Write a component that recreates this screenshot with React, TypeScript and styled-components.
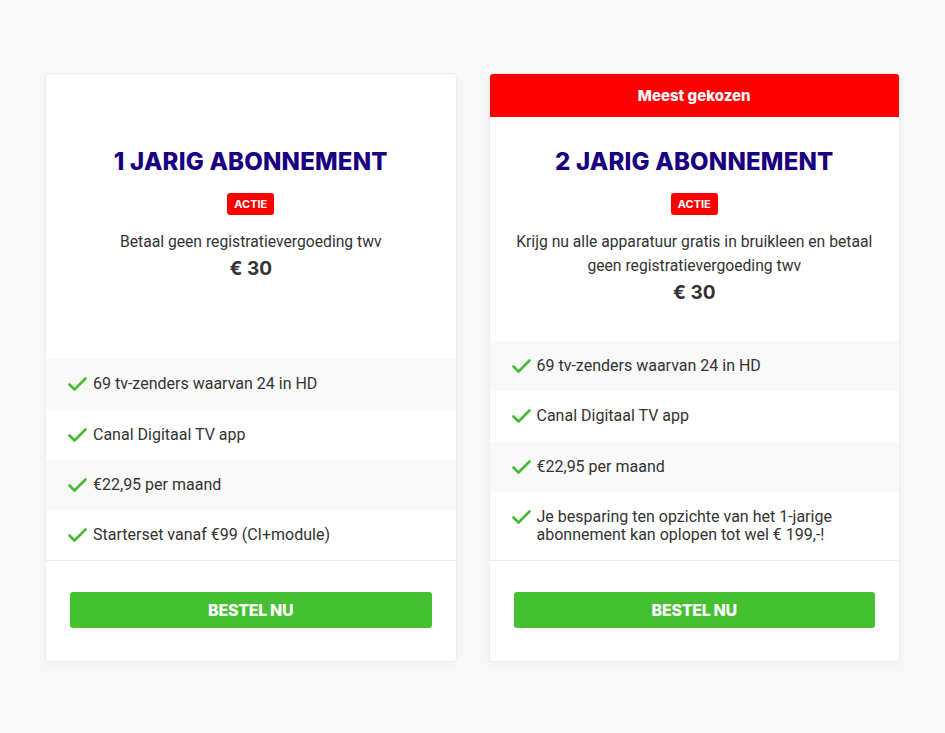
import styled, { createGlobalStyle } from 'styled-components';

const GlobalStyle = createGlobalStyle`
  html, body {
    margin: 0;
    padding: 0;
    background: #f8f8f8;
  }
  body {
    font-family: Roboto, 'Liberation Sans', Arial, sans-serif;
    color: #333;
  }
`;

interface IFeatured {
  featured?: boolean;
}

const Page = styled.div`
  display: flex;
  justify-content: center;
  gap: 32px;
  padding: 73px 45px 70px;
`;

const Card = styled.div`
  flex: 1;
  display: flex;
  flex-direction: column;
  background: #fff;
  border: 1px solid #ececec;
  border-radius: 4px;
  box-shadow: 0 2px 10px rgba(0, 0, 0, 0.03);
  overflow: hidden;
`;

const Ribbon = styled.div<IFeatured>`
  height: 44px;
  display: flex;
  align-items: center;
  justify-content: center;
  background: ${({ featured }) => (featured ? '#ff0000' : 'transparent')};
  color: #fff;
  font-family: Inter, sans-serif;
  font-weight: 800;
  font-size: 15px;
  margin: -1px -1px 0;
`;

const Top = styled.div`
  display: flex;
  flex-direction: column;
  align-items: center;
  padding: 30px 20px 33px;
  text-align: center;
`;

const Title = styled.h2`
  margin: 0;
  font-family: Inter, sans-serif;
  font-weight: 800;
  font-size: 24px;
  line-height: 30px;
  color: #1a0080;
  letter-spacing: 0.2px;
`;

const Badge = styled.span`
  margin-top: 16px;
  background: #ff0000;
  color: #fff;
  font-family: Inter, sans-serif;
  font-weight: 700;
  font-size: 11px;
  line-height: 22px;
  height: 22px;
  padding: 0 7px;
  border-radius: 3px;
`;

const Description = styled.p`
  margin: 15px 0 0;
  font-size: 15.7px;
  line-height: 24px;
  color: #333;
`;

const Price = styled.div`
  font-family: Inter, sans-serif;
  font-weight: 700;
  font-size: 19px;
  line-height: 30px;
  color: #333;
`;

const Features = styled.ul`
  list-style: none;
  margin: auto 0 0;
  padding: 0;
`;

const Feature = styled.li`
  display: flex;
  align-items: flex-start;
  gap: 6px;
  padding: 16px 20px 16px 22px;
  font-size: 16px;
  line-height: 18.25px;
  color: #333;
  &:nth-child(odd) {
    background: #f9f9f9;
  }
`;

const Check = styled.svg`
  flex: none;
  width: 19px;
  height: 18px;
`;

const Footer = styled.div`
  border-top: 1px solid #ececec;
  padding: 31px 24px 33px;
`;

const OrderButton = styled.button`
  display: block;
  width: 100%;
  height: 36px;
  border: none;
  border-radius: 3px;
  background: #44c030;
  color: #fff;
  font-family: Inter, sans-serif;
  font-weight: 800;
  font-size: 16px;
  letter-spacing: -0.3px;
  cursor: pointer;
`;

const CheckIcon = () => (
  <Check viewBox="0 0 19 18">
    <path d="M1.5 9.5 L6.5 14.5 L17.5 3.5" fill="none" stroke="#44bb33" strokeWidth="2.6" strokeLinecap="round" strokeLinejoin="round" />
  </Check>
);

interface IPlan {
  featured?: boolean;
  title: string;
  description: string;
  price: string;
  features: string[];
}

const plans: IPlan[] = [
  {
    title: '1 JARIG ABONNEMENT',
    description: 'Betaal geen registratievergoeding twv',
    price: '€ 30',
    features: ['69 tv-zenders waarvan 24 in HD', 'Canal Digitaal TV app', '€22,95 per maand', 'Starterset vanaf €99 (CI+module)'],
  },
  {
    featured: true,
    title: '2 JARIG ABONNEMENT',
    description: 'Krijg nu alle apparatuur gratis in bruikleen en betaal geen registratievergoeding twv',
    price: '€ 30',
    features: [
      '69 tv-zenders waarvan 24 in HD',
      'Canal Digitaal TV app',
      '€22,95 per maand',
      'Je besparing ten opzichte van het 1-jarige abonnement kan oplopen tot wel € 199,-!',
    ],
  },
];

const App = () => {
  return (
    <>
      <GlobalStyle />
      <Page>
        {plans.map((plan) => (
          <Card key={plan.title}>
            <Ribbon featured={plan.featured}>{plan.featured ? 'Meest gekozen' : ''}</Ribbon>
            <Top>
              <Title>{plan.title}</Title>
              <Badge>ACTIE</Badge>
              <Description>{plan.description}</Description>
              <Price>{plan.price}</Price>
            </Top>
            <Features>
              {plan.features.map((f) => (
                <Feature key={f}>
                  <CheckIcon />
                  <span>{f}</span>
                </Feature>
              ))}
            </Features>
            <Footer>
              <OrderButton>BESTEL NU</OrderButton>
            </Footer>
          </Card>
        ))}
      </Page>
    </>
  );
};

export default App;
